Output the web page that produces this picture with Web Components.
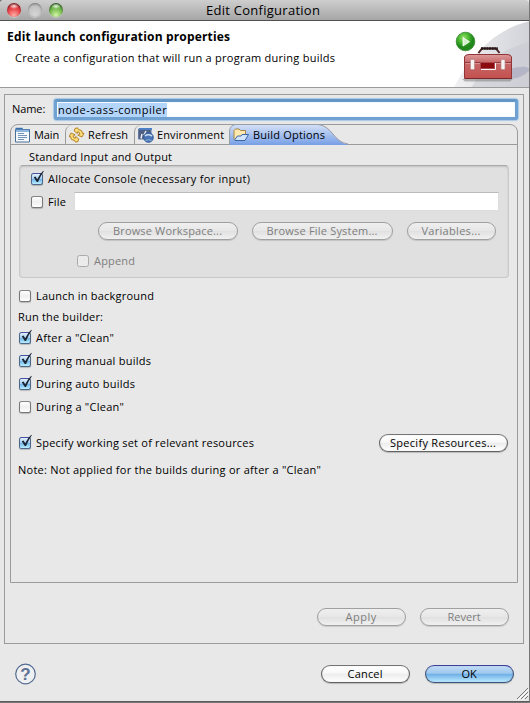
<!DOCTYPE html>
<html lang="en"><head><meta charset="utf-8"><title>Edit Configuration</title>
<style>
html,body{margin:0;height:703px;overflow:hidden}
body{background:#777;font:500 11px "Open Sans","Noto Sans",sans-serif;color:#000}
</style></head><body><edit-dialog></edit-dialog>
<script>
const define=(name,html,setup)=>customElements.define(name,class extends HTMLElement{
  connectedCallback(){
    if(this.shadowRoot)return;
    const t=document.createElement('template');
    t.innerHTML='<style>*{box-sizing:border-box}:host{display:block;box-sizing:border-box}</style>'+html;
    this.attachShadow({mode:'open'}).append(t.content.cloneNode(true));
    if(setup)setup(this,this.shadowRoot);
  }
});

// A single-line label whose tracking is adjusted to fill the width in "w".
define('fit-label','<style>:host{display:inline-block;flex:none;white-space:pre;line-height:16px}span{display:inline-block}</style><span><slot></slot></span>',(h,s)=>{
  const w=+h.getAttribute('w'),sp=s.querySelector('span');
  h.style.width=w+'px';
  requestAnimationFrame(()=>{const n=h.textContent.length,m=sp.getBoundingClientRect().width;sp.style.letterSpacing=((w+.2-m)/n)+'px'});
});

define('mac-button',`<style>
:host{height:18px;display:flex;justify-content:center;align-items:center;flex:none;border:1px solid #626262;border-top-color:#747474;border-radius:9px;background:linear-gradient(#fff 0,#f8f8f8 45%,#ececec 50%,#fff 100%);box-shadow:0 1px 1px #0003,inset 0 0 1px #0004}
:host([disabled]){color:#7e7e7e;border-color:#a0a0a0;background:linear-gradient(#efefef,#e7e7e7 48%,#e1e1e1 52%,#f0f0f0);box-shadow:0 1px 1px #0002}
:host([primary]){border-color:#40557b;border-top-color:#3e429c;background:linear-gradient(#c3dcf5 0,#9dc8ee 46%,#6eaee6 50%,#b9eaff 100%)}
::slotted(*){margin:-1px 1px 0 0}
</style><slot></slot>`);

define('mac-check',`<style>
:host{display:flex;align-items:center;height:16px;gap:5px}
.b{width:12px;height:12px;border:1px solid #777;border-top-color:#858585;border-radius:2.5px;background:linear-gradient(#fff,#efefef 50%,#fff);flex:none;position:relative;box-shadow:0 1px 1px #0003}
svg{display:none;position:absolute;left:-1px;top:-4px;overflow:visible}
:host([checked]) .b{background:linear-gradient(#e3f1fd 0,#a7d0f2 45%,#75b6e8 55%,#b9efff);border-color:#4d6689;border-top-color:#4850a0}
:host([checked]) svg{display:block}
:host([disabled]){color:#7e7e7e}:host([disabled]) .b{border-color:#ababab;background:#ebebeb;box-shadow:none}
</style><div class="b"><svg width="14" height="14" viewBox="0 0 14 14"><path d="M2.7 7.3 4.5 6.6 6.2 9.3Q8.5 4 12.3 .8L12.8 1.2Q9.5 6 7 12L5.8 12Z" fill="#1b2432"/></svg></div><slot></slot>`);

define('title-bar',`<style>
:host{height:21px;background:linear-gradient(#cecece,#a6a6a6);border-bottom:1px solid #515151;display:grid;grid-template-columns:206px 1fr;align-items:center;border-radius:4px 4px 0 0}
.l{display:flex;gap:7px;padding-left:7px}
i{width:14px;height:14px;border-radius:50%;box-shadow:inset 0 1px 2px #0008,0 1px 0 #ddd8}
.r{background:radial-gradient(ellipse 5px 3px at 50% 22%,#ffe7e7,transparent),radial-gradient(circle at 50% 90%,#ffb0a8,#e94348 50%,#a51d24)}
.g{background:radial-gradient(circle at 50% 80%,#d5d5d5,#c2c2c2 60%,#a6a6a6);box-shadow:inset 0 1px 2px #0005,0 1px 0 #ddd8}
.v{background:radial-gradient(ellipse 5px 3px at 50% 22%,#efffe5,transparent),radial-gradient(circle at 50% 90%,#d4f7a6,#76ba50 50%,#39742b)}
fit-label{font-size:13px;font-weight:400}
</style><div class="l"><i class="r"></i><i class="g"></i><i class="v"></i></div><fit-label w="114">Edit Configuration</fit-label>`);

define('toolbox-art',`<style>svg{display:block}</style><svg width="80" height="66" viewBox="449 21 80 66">
<defs><linearGradient id="sw" x1="0" x2="1"><stop stop-color="#f1f1f3"/><stop offset="1" stop-color="#d2d3d9"/></linearGradient>
<linearGradient id="bx" x1="0" y1="0" x2="0" y2="1"><stop stop-color="#dd9b9c"/><stop offset=".35" stop-color="#c76768"/><stop offset="1" stop-color="#c4504f"/></linearGradient>
<radialGradient id="gr" cx=".4" cy=".3"><stop stop-color="#93df68"/><stop offset=".6" stop-color="#45b52d"/><stop offset="1" stop-color="#21871c"/></radialGradient></defs>
<path d="M454 87Q483 32 530 21V87Z" fill="url(#sw)"/><path d="M472 87Q490 51 530 42V87Z" fill="#c9cad1" opacity=".55"/>
<path d="M510 69C522 65 532 67 529 71Q522 78 510 79Z" fill="#a9a9bf" opacity=".7"/>
<path d="M462 79H513L510 81.500H465Z" fill="#777" opacity=".5"/>
<path d="M478.500 53 482 48.500H496L499.500 53" fill="none" stroke="#4b2226" stroke-width="2"/><path d="M481 48.500H498" stroke="#241719" stroke-width="2.400" stroke-dasharray="2 .7"/>
<path d="M464.500 57Q465 54.500 469 54.500H507Q511 54.500 511.500 57V78.500H464.500Z" fill="url(#bx)" stroke="#923336"/>
<path d="M464.500 62.500H511.500" stroke="#93393d"/><path d="M465.500 63.500H511" stroke="#dc9292"/>
<path d="M465 78.500H511.500" stroke="#7b2629"/>
<rect x="470.500" y="59.500" width="4" height="10" rx="1" fill="#f7f4f4" stroke="#b88788" stroke-width=".7"/><rect x="501" y="59.500" width="4" height="10" rx="1" fill="#f7f4f4" stroke="#b88788" stroke-width=".7"/>
<rect x="480.500" y="62.500" width="14" height="6" fill="#8c0b10" stroke="#a94a4d"/><path d="M481 69.500H495.500V63" fill="none" stroke="#fff"/>
<circle cx="465.500" cy="41.500" r="9.300" fill="url(#gr)" stroke="#31872b" stroke-width=".8"/><path d="M463 37.500V46L469.500 41.700Z" fill="#d5efcb" stroke="#fff" stroke-width=".8"/>
</svg>`);

define('wizard-header',`<style>
:host{height:67px;background:#fff;border-bottom:1px solid #9b9b9b;display:flex;justify-content:space-between}
.t{padding:7px 0 0 7px;display:flex;flex-direction:column}
b{font-size:12px;height:21px;display:block}.s{padding:1px 0 0 8px}
</style><div class="t"><b><fit-label w="223">Edit launch configuration properties</fit-label></b><div class="s"><fit-label w="320">Create a configuration that will run a program during builds</fit-label></div></div><toolbox-art></toolbox-art>`);

const icons={
main:'<path d="M.5 2.500V15H14.500V2.500Z" fill="#f5f9fd" stroke="#4a7196"/><path d="M.5 1.500H7V3H14.500" fill="none" stroke="#3d6fae" stroke-width="1.500"/><path d="M1 2.800H14V5H1Z" fill="#8fb7dd"/><path d="M3 6.500H9M3 8.500H12M3 10.500H12M3 12.500H9" stroke="#7095b8"/>',
refresh:'<g fill="#fbdc78" stroke="#ad791a" stroke-width=".9" stroke-linejoin="round"><path id="a" d="M6 1.500 8.500 .8 9.500 2.500Q13.500 2.500 13.600 6.500L15 6.200 13 10 8.800 8.200 10.800 7.200Q10.800 5 8.800 4.700L8.300 6.500 5.200 4Z"/><path d="M9 14.500 6.500 15.200 5.500 13.500Q1.500 13.500 1.400 9.500L0 9.800 2 6 6.200 7.800 4.200 8.800Q4.200 11 6.200 11.300L6.700 9.500 9.800 12Z"/></g>',
env:'<path d="M.5 2H13V12H.5Z" fill="#4e5f83" stroke="#62779b"/><path d="M1 2H14" stroke="#4d81c3" stroke-width="2"/><path d="M3 11.500 4 7M6 8 8 4" fill="none" stroke="#e9edf4" stroke-width="1.500"/><circle cx="10.500" cy="10.500" r="4.800" fill="#4a74b4" stroke="#355d99"/><path d="M7 9Q10 6.500 14 9" stroke="#c7dcf2" stroke-width="1.600" fill="none"/><path d="M7.500 13.500Q10.500 12 13.500 13.500" stroke="#90b4de" fill="none"/>',
folder:'<path d="M1 12.500V3.500L2.500 2H6L7.500 3.500H12.500V7" fill="#ffe9af" stroke="#a88543"/><path d="M1.500 13 4.500 9H8L9 7.500H15.500L12 13.500H2Z" fill="#d2e4fb" stroke="#3964a3"/>'};
define('tab-icon','<style>:host{width:16px;height:16px;flex:none}svg{display:block}</style><svg width="16" height="16"></svg>',(h,s)=>s.querySelector('svg').innerHTML=icons[h.getAttribute('name')]);

define('tab-item',`<style>:host{height:20px;display:flex;align-items:center;gap:3px;padding-left:4px;border-top-left-radius:7px;flex:none;position:relative;z-index:0}
:host([line]){border-left:1px solid #9b9b9b}
svg{display:none}:host([active]) svg{display:block;position:absolute;left:0;top:-1px;z-index:-1}
</style><svg width="120" height="21"><defs><linearGradient id="g" x2="0" y2="1"><stop stop-color="#d5e1f7"/><stop offset="1" stop-color="#779fe6"/></linearGradient></defs><path d="M.5 21V7Q1 1 7 .5H89C104 2 104 18 119 20.500V21Z" fill="url(#g)"/><path d="M.5 21V7Q1 1 7 .5H89C104 2 104 18 119 20" fill="none" stroke="#989da6"/></svg><slot></slot>`);

define('tab-folder',`<style>:host{margin:0 5px 0 5px;height:459px;border:1px solid #9b9b9b;border-radius:8px 8px 0 0}
.tabs{height:20px;display:flex;border-bottom:1px solid #9b9b9b}</style><div class="tabs"><slot name="tabs"></slot></div><slot></slot>`);

define('group-box','<style>:host{height:113px;margin:0 8px 0 8px;border:1px solid #c9c9c9;border-top-color:#a9a9a9;border-radius:4px;background:#e0e0e0;box-shadow:inset 0 1px 2px #0002;padding-top:5px}</style><slot></slot>');

define('text-field',`<style>:host{height:19px;background:#fff;border:1px solid #ddd;border-top-color:#bbb}
:host([focus]){height:21px;border:3px solid #6fa2d3;border-top-color:#6597c6;border-radius:3px;box-shadow:0 0 1px 1px #a9c9e6,inset 0 0 1px #9cc2e4;padding:0 1px;display:flex;align-items:center}
::slotted(*){background:#b3d5fc;line-height:14px}</style><slot></slot>`);

define('help-button','<style>:host{width:22px;height:22px}svg{display:block}text{font:bold 17px "Liberation Sans",sans-serif;fill:#5d7194}</style><svg width="22" height="22"><circle cx="10.500" cy="11" r="9.800" fill="#eff0f1" stroke="#536b91" stroke-width="1.200"/><text x="10.500" y="17" text-anchor="middle">?</text></svg>');

define('edit-dialog',`<style>
:host{width:529px;height:702px;background:#e8e8e8;border-bottom:1px solid #5c5c5c;position:relative;overflow:hidden;border-radius:4px 0 0 0}
.frame{margin:6px 5px 0 4px;height:550px;border:1px solid #9b9b9b}
.name{display:grid;grid-template-columns:33px 1fr;column-gap:9px;height:29px;padding:4px 5px 0 7px}.name>fit-label{margin-top:2px}
.sec{padding:4px 0 0 18px;height:20px}
.r1{padding-left:11px}.file{display:flex;align-items:center;gap:8px;padding:0 9px 0 11px;height:19px;margin-top:5px}.file text-field{flex:1}
.btns{display:flex;gap:14px;padding:11px 0 0 78px}
.app{padding:13px 0 0 57px}
.opts{padding:10px 9px 0 8px;display:flex;flex-direction:column}
.opts>fit-label{margin-left:-1px}
.opts>*{margin-bottom:7px}.row{display:flex;justify-content:space-between;align-items:center;height:18px;margin-top:12px}
.acts{display:flex;justify-content:flex-end;gap:14px;padding:25px 14px 0 0}
.foot{display:flex;align-items:center;padding:19px 15px 0 15px}.foot mac-button+mac-button{margin-left:15px}.sp{flex:1}
.grip{position:absolute;right:0;bottom:1px}
</style>
<title-bar></title-bar><wizard-header></wizard-header>
<div class="frame">
<div class="name"><fit-label w="33">Name:</fit-label><text-field focus><fit-label w="109">node-sass-compiler</fit-label></text-field></div>
<tab-folder>
<tab-item slot="tabs" style="width:54px"><tab-icon name="main"></tab-icon><fit-label w="25">Main</fit-label></tab-item>
<tab-item slot="tabs" line style="width:69px;padding-left:3px"><tab-icon name="refresh"></tab-icon><fit-label w="40">Refresh</fit-label></tab-item>
<tab-item slot="tabs" line style="width:95px;padding-left:3px"><tab-icon name="env"></tab-icon><fit-label w="67">Environment</fit-label></tab-item>
<tab-item slot="tabs" active style="width:120px;padding-left:4px;gap:4px"><tab-icon name="folder"></tab-icon><fit-label w="72">Build Options</fit-label></tab-item>
<div class="sec"><fit-label w="143">Standard Input and Output</fit-label></div>
<group-box>
<div class="r1"><mac-check checked><fit-label w="202">Allocate Console (necessary for input)</fit-label></mac-check></div>
<div class="file"><mac-check><fit-label w="18">File</fit-label></mac-check><text-field></text-field></div>
<div class="btns"><mac-button disabled style="width:140px"><fit-label w="109">Browse Workspace...</fit-label></mac-button><mac-button disabled style="width:141px"><fit-label w="111">Browse File System...</fit-label></mac-button><mac-button disabled style="width:89px"><fit-label w="59">Variables...</fit-label></mac-button></div>
<div class="app"><mac-check disabled><fit-label w="41">Append</fit-label></mac-check></div>
</group-box>
<div class="opts">
<mac-check style="margin-bottom:5px"><fit-label w="118">Launch in background</fit-label></mac-check>
<fit-label w="85" style="margin-bottom:5px">Run the builder:</fit-label>
<mac-check checked><fit-label w="78">After a "Clean"</fit-label></mac-check>
<mac-check checked><fit-label w="115">During manual builds</fit-label></mac-check>
<mac-check checked><fit-label w="99">During auto builds</fit-label></mac-check>
<mac-check><fit-label w="88">During a "Clean"</fit-label></mac-check>
<div class="row"><mac-check checked><fit-label w="218">Specify working set of relevant resources</fit-label></mac-check><mac-button style="width:129px"><fit-label w="106">Specify Resources...</fit-label></mac-button></div>
<fit-label w="303" style="margin-top:3px">Note: Not applied for the builds during or after a "Clean"</fit-label>
</div>
</tab-folder>
<div class="acts"><mac-button disabled style="width:89px"><fit-label w="31">Apply</fit-label></mac-button><mac-button disabled style="width:89px"><fit-label w="33">Revert</fit-label></mac-button></div>
</div>
<div class="foot"><help-button></help-button><div class="sp"></div><mac-button style="width:89px"><fit-label w="35">Cancel</fit-label></mac-button><mac-button primary style="width:89px"><fit-label w="15">OK</fit-label></mac-button></div>
<svg class="grip" width="13" height="13"><path d="M1 12 12 1M5 12 12 5M9 12 12 9" stroke="#777"/><path d="M2 13 13 2M6 13 13 6" stroke="#fff"/></svg>`);
</script></body></html>
